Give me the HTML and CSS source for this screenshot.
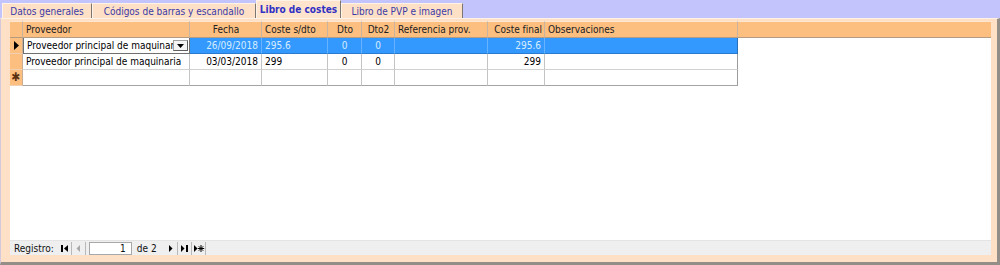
FILE: index.html
```html
<!DOCTYPE html>
<html lang="es">
<head>
<meta charset="utf-8">
<title>Libro de costes</title>
<link rel="stylesheet" href="styles.css">
</head>
<body>
<div class="tabs">
  <div class="tab t1">Datos generales</div>
  <div class="tab t2">Códigos de barras y escandallo</div>
  <div class="tab active">Libro de costes</div>
  <div class="tab t4">Libro de PVP e imagen</div>
</div>
<div class="frame">
  <div class="sheet">
    <table class="grid">
      <colgroup>
        <col class="c-sel"><col class="c-prov"><col class="c-fecha"><col class="c-coste"><col class="c-dto"><col class="c-dto2"><col class="c-ref"><col class="c-final"><col class="c-obs"><col class="c-fill">
      </colgroup>
      <thead>
        <tr>
          <th class="sel"></th>
          <th>Proveedor</th>
          <th class="ctr">Fecha</th>
          <th>Coste s/dto</th>
          <th class="ctr">Dto</th>
          <th class="ctr">Dto2</th>
          <th>Referencia prov.</th>
          <th class="rgt">Coste final</th>
          <th>Observaciones</th>
          <th class="fill"></th>
        </tr>
      </thead>
      <tbody>
        <tr class="cur">
          <td class="sel"><svg class="arrow" width="7" height="11" viewBox="0 0 7 11"><polygon points="1,1 6,5.5 1,10" fill="#000"/></svg></td>
          <td class="combo"><div class="combo-in"><span class="combo-txt">Proveedor principal de maquinaria</span><span class="drop"><svg width="9" height="6" viewBox="0 0 9 6"><polygon points="1,1 8,1 4.5,5" fill="#000"/></svg></span></div></td>
          <td class="rgt">26/09/2018</td>
          <td>295.6</td>
          <td class="ctr">0</td>
          <td class="ctr">0</td>
          <td></td>
          <td class="rgt">295.6</td>
          <td class="last"></td>
          <td class="fill"></td>
        </tr>
        <tr>
          <td class="sel"></td>
          <td>Proveedor principal de maquinaria</td>
          <td class="rgt">03/03/2018</td>
          <td>299</td>
          <td class="ctr">0</td>
          <td class="ctr">0</td>
          <td></td>
          <td class="rgt">299</td>
          <td class="last"></td>
          <td class="fill"></td>
        </tr>
        <tr class="new">
          <td class="sel"><span class="star">✱</span></td>
          <td></td>
          <td></td>
          <td></td>
          <td></td>
          <td></td>
          <td></td>
          <td></td>
          <td class="last"></td>
          <td class="fill"></td>
        </tr>
      </tbody>
    </table>
  </div>
  <div class="nav">
    <span class="lbl">Registro:</span>
    <span class="btn"><svg width="13" height="11" viewBox="0 0 13 11"><rect x="3" y="2" width="2" height="7" fill="#000"/><polygon points="10,2 10,9 6,5.5" fill="#000"/></svg></span>
    <span class="btn"><svg width="13" height="11" viewBox="0 0 13 11"><polygon points="8,2 8,9 4.5,5.5" fill="#a8a8a8"/></svg></span>
    <span class="box">1</span>
    <span class="of">de 2</span>
    <span class="btn"><svg width="13" height="11" viewBox="0 0 13 11"><polygon points="5,2 5,9 8.5,5.5" fill="#000"/></svg></span>
    <span class="btn"><svg width="13" height="11" viewBox="0 0 13 11"><polygon points="3,2 3,9 6.5,5.5" fill="#000"/><rect x="8" y="2" width="2" height="7" fill="#000"/></svg></span>
    <span class="btn"><svg width="13" height="11" viewBox="0 0 13 11"><polygon points="2,2 2,9 5.5,5.5" fill="#000"/><g stroke="#000" stroke-width="1"><line x1="9" y1="2" x2="9" y2="9"/><line x1="5.8" y1="5.5" x2="12.2" y2="5.5"/><line x1="6.8" y1="3.3" x2="11.2" y2="7.7"/><line x1="11.2" y1="3.3" x2="6.8" y2="7.7"/></g></svg></span>
  </div>
</div>
</body>
</html>
```

FILE: styles.css
```css
* { box-sizing: border-box; }
html, body { margin: 0; padding: 0; }
body {
  width: 1000px;
  height: 265px;
  overflow: hidden;
  background: #c4c4fc;
  font-family: "DejaVu Sans Condensed", "DejaVu Sans", sans-serif;
  font-stretch: condensed;
  font-size: 10px;
  color: #000;
}

/* Tabs */
.tabs {
  display: flex;
  align-items: flex-end;
  height: 18px;
  padding-left: 2px;
}
.tab {
  height: 15px;
  display: flex;
  align-items: center;
  justify-content: center;
  background: #fee0c6;
  color: #3a3aa6;
  border-top: 1px solid #fff3e8;
  border-left: 1px solid #fff3e8;
  border-right: 1px solid #7c7670;
  white-space: nowrap;
  padding-top: 1px;
}
.t1 { width: 90px; }
.t2 { width: 164px; }
.tab.active {
  width: 85px;
  height: 18px;
  font-weight: bold;
  color: #3030c4;
  background: #fee4cc;
  padding-bottom: 2px;
}
.t4 { width: 122px; }

/* Frame */
.frame {
  height: 247px;
  background: #fee0c6;
  border-top: 1px solid #fff2e4;
  border-left: 1px solid #d4c8dc;
  border-right: 3px solid #948e88;
  border-bottom: 3px solid #948e88;
  padding: 2px 6px 7px 9px;
  display: flex;
  flex-direction: column;
}
.sheet {
  height: 219px;
  flex: none;
  background: #fff;
}

/* Grid */
.grid {
  table-layout: fixed;
  border-collapse: separate;
  border-spacing: 0;
  width: 981px;
}
.c-sel { width: 13px; }
.c-prov { width: 167px; }
.c-fecha { width: 72px; }
.c-coste { width: 66px; }
.c-dto { width: 34px; }
.c-dto2 { width: 33px; }
.c-ref { width: 93px; }
.c-final { width: 57px; }
.c-obs { width: 193px; }
.c-fill { width: 253px; }

.grid th {
  height: 17px;
  padding: 0 2px 0 3px;
  background: #fdbf80;
  color: #202020;
  font-weight: normal;
  text-align: left;
  white-space: nowrap;
  overflow: hidden;
  border-top: 1px solid #ffe6cf;
  border-bottom: 1px solid #b49c84;
  border-right: 1px solid #c8b4a0;
}
.grid th.fill { border-right: none; }
.grid td {
  height: 16px;
  padding: 0 3px;
  white-space: nowrap;
  overflow: hidden;
  border-right: 1px solid #c4c4c4;
  border-bottom: 1px solid #d2d2d2;
}
.grid td.sel {
  background: #fdbf80;
  border-right: 1px solid #c8ae94;
  border-bottom: 1px solid #f0d0b0;
  padding: 0 0 0 1px;
}
.grid td.last { border-right: 1px solid #9c9c9c; }
.grid td.fill { border: none; }
.grid tr.new td { border-bottom: 1px solid #a4a4a4; }
.grid tr.new td.sel { border-bottom: 1px solid #f0d0b0; }
.grid tr.new td.fill { border: none; }

.grid th.ctr, .grid td.ctr { text-align: center; }
.grid th.rgt, .grid td.rgt { text-align: right; }

.arrow { display: block; margin-left: 2px; }
.star { display: block; color: #5a3010; font-size: 12px; line-height: 15px; }

/* current row */
.grid tr.cur td {
  background: #3399ff;
  color: #d6ecff;
  border-right: 1px solid #66b2ff;
  border-bottom: 1px solid #2a7ad0;
}
.grid tr.cur td.sel {
  background: #fdbf80;
  border-right: 1px solid #c8ae94;
  border-bottom: 1px solid #f0d0b0;
}
.grid tr.cur td.last { border-right: 1px solid #2a70b8; }
.grid tr.cur td.fill { background: #fff; border: none; }
.grid tr.cur td.combo {
  background: #fff;
  color: #000;
  padding: 0;
  border: 1px solid #707070;
  border-top: none;
}
.combo-in {
  display: flex;
  align-items: center;
  height: 15px;
  padding-left: 3px;
}
.combo-txt {
  flex: 1;
  overflow: hidden;
  white-space: nowrap;
}
.drop {
  flex: none;
  width: 15px;
  height: 11px;
  margin-right: 1px;
  display: flex;
  align-items: center;
  justify-content: center;
  background: #f4f4f4;
  border: 1px solid #a0a0a0;
  border-right-color: #606060;
  border-bottom-color: #606060;
}
.drop svg { display: block; }

/* Navigation */
.nav {
  height: 15px;
  flex: none;
  background: #efefef;
  border-top: 1px solid #e4e4e4;
  display: flex;
  align-items: center;
  padding-left: 4px;
  color: #111;
}
.lbl { margin-right: 4px; }
.btn {
  width: 14px;
  height: 13px;
  display: flex;
  align-items: center;
  justify-content: center;
  border-right: 1px solid #b8b8b8;
}
.btn svg { display: block; }
.box {
  width: 43px;
  height: 13px;
  margin-left: 3px;
  background: #fff;
  border: 1px solid #a8a8a8;
  text-align: right;
  padding-right: 5px;
  line-height: 11px;
}
.of { margin: 0 7px 0 5px; }
```
